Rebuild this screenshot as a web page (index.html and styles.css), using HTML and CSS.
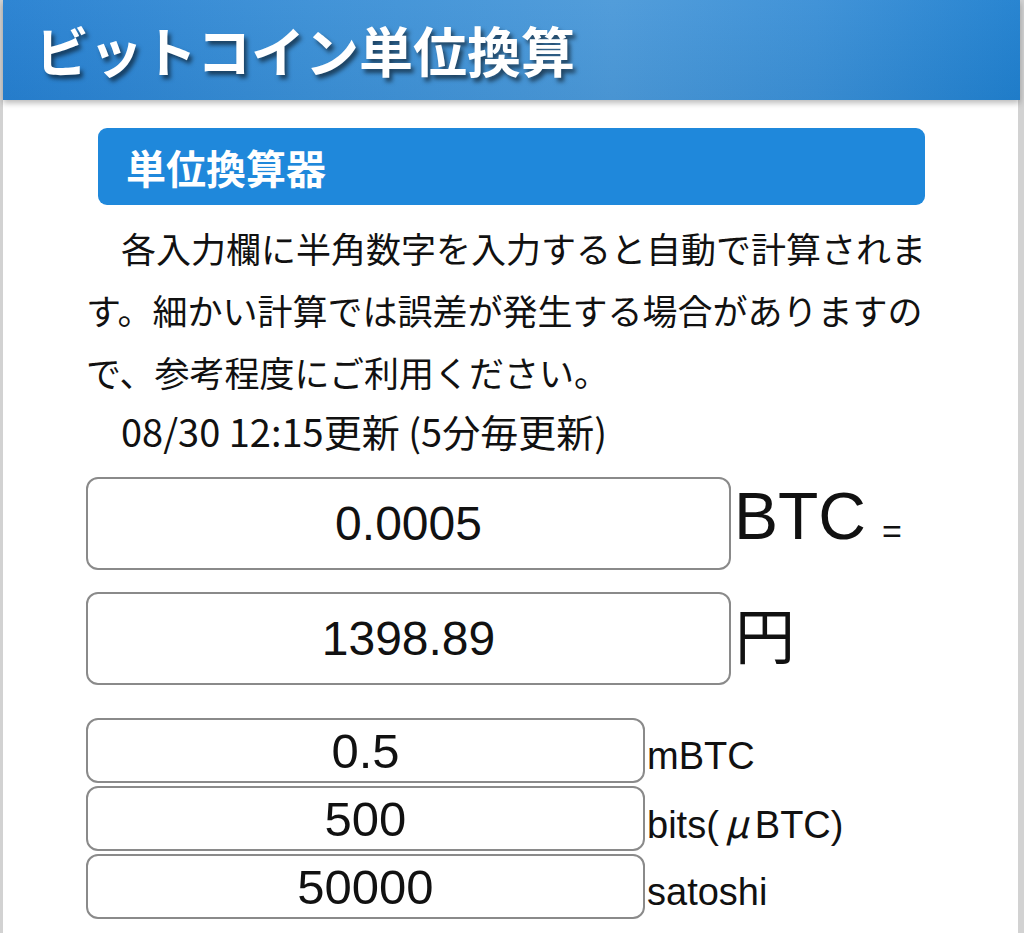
FILE: index.html
```html
<!DOCTYPE html>
<html lang="ja">
<head>
<meta charset="utf-8">
<title>ビットコイン単位換算</title>
<link rel="stylesheet" href="styles.css">
</head>
<body>
<div class="page">
  <header class="site-header">
    <h1 class="site-title">ビットコイン単位換算</h1>
  </header>
  <main class="content">
    <h2 class="section-title">単位換算器</h2>
    <p class="intro">各入力欄に半角数字を入力すると自動で計算されます。細かい計算では誤差が発生する場合がありますので、参考程度にご利用ください。</p>
    <p class="updated">08/30 12:15更新 (5分毎更新)</p>

    <div class="row row-large">
      <input class="field field-large" type="text" value="0.0005">
      <span class="unit unit-btc">BTC</span><span class="equals">=</span>
    </div>
    <div class="row row-large row-yen">
      <input class="field field-large" type="text" value="1398.89">
      <span class="unit unit-yen">円</span>
    </div>

    <div class="small-group">
      <div class="row">
        <input class="field field-small" type="text" value="0.5">
        <span class="unit unit-small">mBTC</span>
      </div>
      <div class="row">
        <input class="field field-small" type="text" value="500">
        <span class="unit unit-small">bits(<span class="mu">μ</span>BTC)</span>
      </div>
      <div class="row">
        <input class="field field-small" type="text" value="50000">
        <span class="unit unit-small">satoshi</span>
      </div>
    </div>
  </main>
</div>
</body>
</html>
```

FILE: styles.css
```css
html, body {
  margin: 0;
  padding: 0;
}

body {
  background: #d2d2d2;
  font-family: "Liberation Sans", "Noto Sans CJK JP", sans-serif;
  color: #111;
  height: 933px;
  overflow: hidden;
}

.page {
  margin-left: 3px;
  width: 1015px;
  min-height: 933px;
  background: #ffffff;
}

.site-header {
  height: 100px;
  width: 1017px;
  display: flex;
  align-items: center;
  background:
    linear-gradient(to bottom, rgba(255,255,255,0.04), rgba(0,0,0,0.03)),
    linear-gradient(to right, #2680d1 0%, #3a8fd6 30%, #4b99d9 60%, #3a8fd6 80%, #2080cf 100%);
  box-shadow: 0 3px 6px rgba(0, 0, 0, 0.28);
  position: relative;
  z-index: 1;
}

.site-title {
  margin: 0 0 0 32px;
  font-family: "Noto Sans CJK JP", sans-serif;
  font-weight: 700;
  font-size: 54px;
  line-height: 1;
  color: #ffffff;
  letter-spacing: 0;
  text-shadow: 3px 4px 4px rgba(0, 0, 0, 0.55);
}

.content {
  padding: 28px 0 0 83px;
  width: 850px;
}

.section-title {
  margin: 0 11px 0 12px;
  height: 77px;
  box-sizing: border-box;
  padding-left: 28px;
  display: flex;
  align-items: center;
  background: #1f88db;
  border-radius: 9px;
  color: #ffffff;
  font-family: "Noto Sans CJK JP", sans-serif;
  font-weight: 700;
  font-size: 40px;
  line-height: 1;
}

.intro {
  margin: 12px 0 0 0;
  font-family: "Noto Sans CJK JP", sans-serif;
  font-size: 35px;
  line-height: 62px;
  text-indent: 1em;
  color: #111;
}

.updated {
  margin: 0;
  font-family: "Noto Sans CJK JP", sans-serif;
  font-size: 38px;
  line-height: 56px;
  padding-left: 35px;
  color: #111;
}

.row {
  display: flex;
  align-items: center;
}

.row-large {
  margin-top: 18px;
}

.row-yen {
  margin-top: 22px;
}

.field {
  box-sizing: border-box;
  border: 2px solid #8a8a8a;
  border-radius: 12px;
  background: #ffffff;
  text-align: center;
  font-family: "Liberation Sans", sans-serif;
  color: #111;
  padding: 0;
  margin: 0;
  outline: none;
}

.field-large {
  width: 645px;
  height: 93px;
  font-size: 48px;
}

.field-small {
  width: 559px;
  height: 65px;
  font-size: 49px;
}

.unit {
  line-height: 1;
  color: #111;
}

.unit-btc {
  font-size: 66px;
  margin-left: 3px;
  position: relative;
  top: -8px;
}

.equals {
  font-size: 34px;
  margin-left: 16px;
  position: relative;
  top: 8px;
}

.unit-yen {
  font-family: "Noto Sans CJK JP", sans-serif;
  font-size: 60px;
  margin-left: 4px;
  position: relative;
  top: -6px;
}

.small-group {
  margin-top: 33px;
  display: flex;
  flex-direction: column;
  gap: 3px;
}

.unit-small {
  font-size: 38px;
  margin-left: 2px;
  position: relative;
  top: 5px;
}

.mu {
  font-family: "Noto Sans CJK JP", sans-serif;
  font-style: italic;
  display: inline-block;
  width: 36px;
  text-align: center;
}
```
